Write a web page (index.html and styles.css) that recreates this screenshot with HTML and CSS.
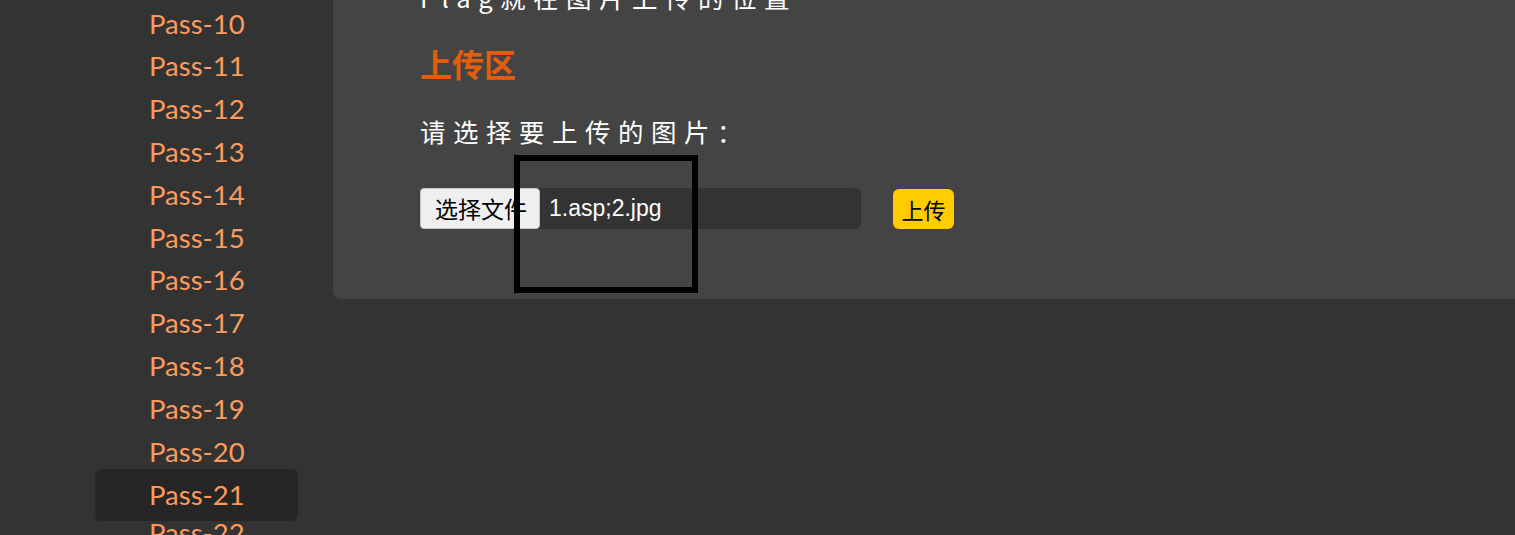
FILE: index.html
```html
<!DOCTYPE html>
<html lang="zh-CN">
<head>
<meta charset="utf-8">
<title>upload-labs Pass-21</title>
<link rel="stylesheet" href="styles.css">
</head>
<body>
<div class="page">
  <aside class="sidebar">
    <ul class="menu">
      <li><a href="#">Pass-10</a></li>
      <li><a href="#">Pass-11</a></li>
      <li><a href="#">Pass-12</a></li>
      <li><a href="#">Pass-13</a></li>
      <li><a href="#">Pass-14</a></li>
      <li><a href="#">Pass-15</a></li>
      <li><a href="#">Pass-16</a></li>
      <li><a href="#">Pass-17</a></li>
      <li><a href="#">Pass-18</a></li>
      <li><a href="#">Pass-19</a></li>
      <li><a href="#">Pass-20</a></li>
      <li><a href="#" class="active">Pass-21</a></li>
      <li><a href="#">Pass-22</a></li>
    </ul>
  </aside>
  <main class="content">
    <section class="panel">
      <p class="flag">Flag就在图片上传的位置</p>
      <h2 class="title">上传区</h2>
      <p class="label">请选择要上传的图片：</p>
      <form class="upload-row">
        <div class="file-input">
          <span class="file-btn">选择文件</span>
          <span class="file-name">1.asp;2.jpg</span>
        </div>
        <span class="submit-btn">上传</span>
      </form>
    </section>
  </main>
</div>
<div class="marker"></div>
</body>
</html>
```
FILE: styles.css
```css
html, body {
  margin: 0;
  padding: 0;
  background: #333333;
  overflow: hidden;
}

body {
  width: 1515px;
  height: 535px;
  font-family: "Liberation Sans", "Noto Sans CJK SC", sans-serif;
}

.page {
  display: flex;
  align-items: flex-start;
}

.sidebar {
  width: 333px;
  flex: none;
}

.menu {
  list-style: none;
  margin: 2.6px 0 0 0;
  padding: 0 0 0 95px;
}

.menu li {
  height: 42.8px;
}

.menu a {
  display: block;
  box-sizing: border-box;
  width: 203px;
  padding-left: 54px;
  line-height: 42.8px;
  font-family: Lato, "Noto Sans", sans-serif;
  font-size: 27.5px;
  color: #fa9b5d;
  text-decoration: none;
}

.menu a.active {
  background: #262626;
  border-radius: 7px;
  padding-top: 4.6px;
  padding-bottom: 4.6px;
  margin-top: -4.4px;
}

.content {
  flex: 1;
  min-width: 0;
}

.panel {
  background: #444444;
  border-radius: 0 0 0 8px;
  margin-top: -41px;
  padding: 20px 0 70px 87px;
}

.flag,
.label {
  margin: 0;
  font-family: "Noto Sans CJK SC", "Liberation Sans", sans-serif;
  font-size: 25.5px;
  line-height: 36px;
  letter-spacing: 7.5px;
  color: #ffffff;
}

.title {
  margin: 27.7px 0 0 0;
  font-family: "Noto Sans CJK SC", sans-serif;
  font-size: 32px;
  line-height: 40px;
  font-weight: 700;
  color: #e35d0b;
}

.label {
  margin-top: 30px;
}

.upload-row {
  display: flex;
  align-items: center;
  gap: 32px;
  margin: 39px 0 0 0;
}

.file-input {
  display: flex;
  align-items: center;
  width: 441px;
  height: 41px;
  background: #333333;
  border-radius: 6px;
}

.file-btn {
  box-sizing: border-box;
  width: 120px;
  height: 41px;
  display: flex;
  align-items: center;
  padding-left: 14px;
  background: #efefef;
  border: 1px solid #c4c4c4;
  border-radius: 4px;
  font-family: "Liberation Sans", "Noto Sans CJK SC", sans-serif;
  font-size: 23px;
  color: #000000;
  white-space: nowrap;
  overflow: hidden;
}

.file-name {
  margin-left: 9px;
  font-family: "Liberation Sans", sans-serif;
  font-size: 23px;
  color: #ffffff;
}

.submit-btn {
  display: flex;
  align-items: center;
  justify-content: center;
  width: 61px;
  height: 40px;
  background: #ffcc00;
  border-radius: 6px;
  font-family: "Noto Sans CJK SC", sans-serif;
  font-size: 22px;
  color: #000000;
  margin-top: 1px;
}

.marker {
  position: absolute;
  left: 514px;
  top: 155px;
  width: 172px;
  height: 126px;
  border: 6px solid #000000;
}
```
